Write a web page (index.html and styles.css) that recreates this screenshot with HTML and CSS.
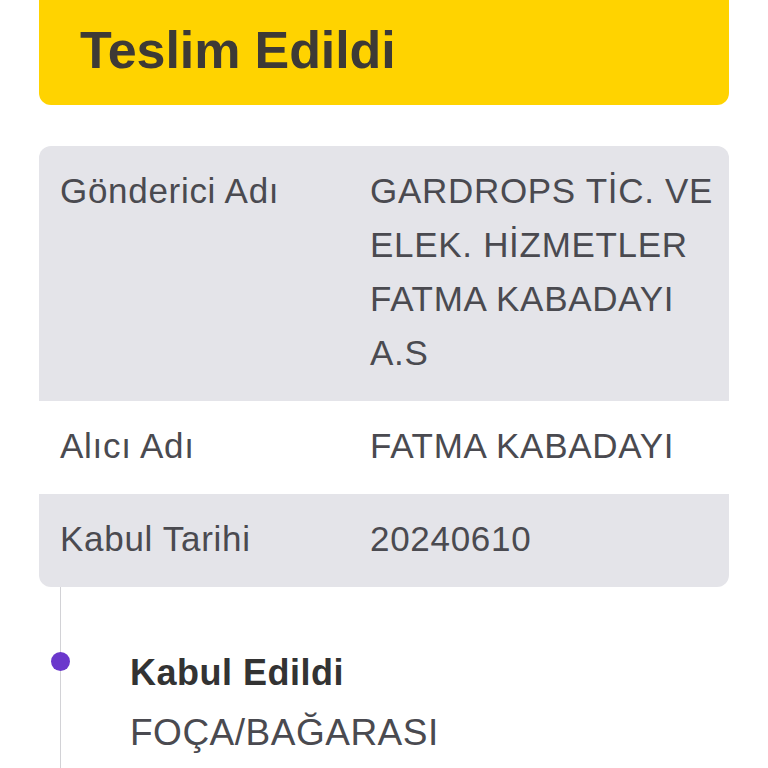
FILE: index.html
```html
<!DOCTYPE html>
<html lang="tr">
<head>
    <meta charset="UTF-8">
    <meta name="viewport" content="width=device-width, initial-scale=1.0">
    <title>Gönderi Takibi</title>
    <link rel="stylesheet" href="styles.css">
</head>
<body>
    <div class="status">
        <h1>Teslim Edildi</h1>
    </div>

    <div class="details">
        <div class="row shaded">
            <div class="label">Gönderici Adı</div>
            <div class="value">GARDROPS TİC. VE<br>ELEK. HİZMETLER<br>FATMA KABADAYI<br>A.S</div>
        </div>
        <div class="row">
            <div class="label">Alıcı Adı</div>
            <div class="value">FATMA KABADAYI</div>
        </div>
        <div class="row shaded">
            <div class="label">Kabul Tarihi</div>
            <div class="value">20240610</div>
        </div>
    </div>

    <div class="timeline">
        <div class="event">
            <span class="dot"></span>
            <div class="event-title">Kabul Edildi</div>
            <div class="event-place">FOÇA/BAĞARASI</div>
        </div>
    </div>
</body>
</html>
```

FILE: styles.css
```css
:root {
    --yellow: #FFD300;
    --card-grey: #E4E4E9;
    --text: #4a4a50;
    --purple: #6b38cc;
}

body {
    margin: 0;
    padding: 0 39px;
    background: #fff;
    font-family: 'Liberation Sans', Arial, sans-serif;
    color: var(--text);
}

.status {
    background: var(--yellow);
    border-radius: 0 0 12px 12px;
    height: 105px;
    padding-left: 41px;
    box-sizing: border-box;
}

.status h1 {
    margin: 0;
    font-size: 52px;
    font-weight: 700;
    letter-spacing: -0.1px;
    line-height: 100px;
    color: #3d3a36;
}

.details {
    margin-top: 41px;
    border-radius: 12px;
    overflow: hidden;
}

.row {
    display: flex;
    padding: 17.5px 21px 21.5px;
    font-size: 35px;
    letter-spacing: 0.7px;
    line-height: 54px;
    background: #fff;
}

.row.shaded {
    background: var(--card-grey);
}

.label {
    width: 310px;
    flex-shrink: 0;
}

.value {
    flex: 1;
    white-space: nowrap;
}

.timeline {
    margin-left: 21px;
    border-left: 1px solid #d2d2d6;
    min-height: 200px;
}

.event {
    position: relative;
    padding: 61px 0 0 69px;
}

.dot {
    position: absolute;
    left: -10px;
    top: 65px;
    width: 19px;
    height: 19px;
    border-radius: 50%;
    background: var(--purple);
}

.event-title {
    font-size: 36px;
    font-weight: 700;
    letter-spacing: 0.5px;
    line-height: 50px;
    color: #333;
}

.event-place {
    margin-top: 10px;
    font-size: 37px;
    letter-spacing: 0.5px;
    line-height: 50px;
    color: var(--text);
}
```
